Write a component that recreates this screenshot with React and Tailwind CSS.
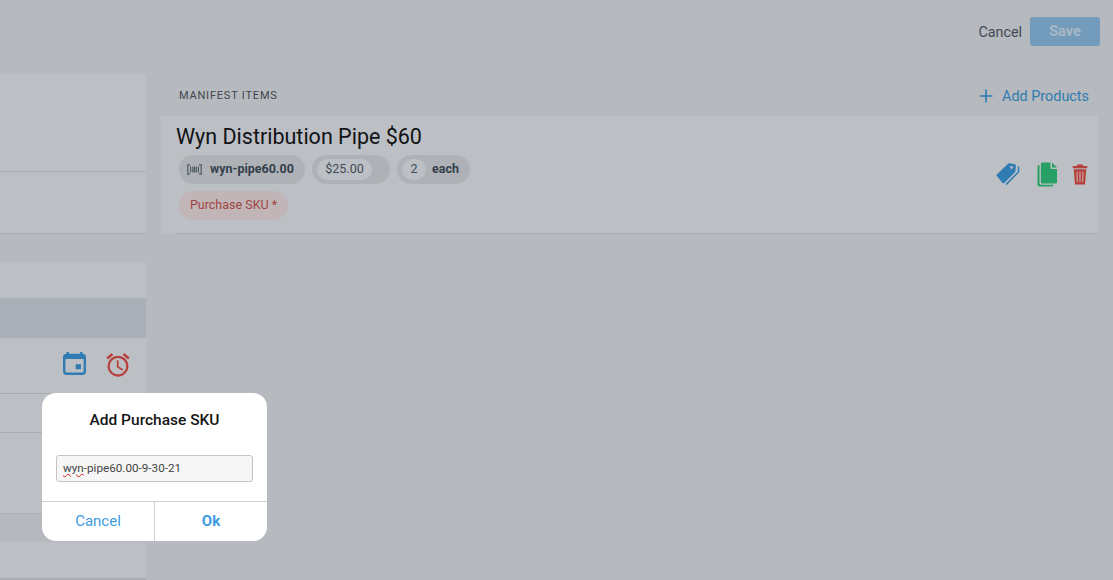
import React from 'react';
import { Plus } from 'lucide-react';
import { MdOutlineAlarm } from 'react-icons/md';

const Row = ({ className = '', children }) => (
  <div className={`border-b border-[#a9acb0] ${className}`}>{children}</div>
);

const BarcodeIcon = () => (
  <svg width="15" height="11" viewBox="0 0 15 11" fill="none" stroke="#4e5a64" strokeWidth="1.2">
    <path d="M3 .8H.8v9.4H3M12 .8h2.2v9.4H12" />
    <path d="M3.6 2.5v6M5.8 2.5v6M7.5 2.5v6M9.2 2.5v6M11.4 2.5v6" />
  </svg>
);

const TagIcon = () => (
  <svg width="24" height="25" viewBox="0 0 24 25" className="text-[#2f7cb3]">
    <path
      fill="currentColor"
      fillRule="evenodd"
      d="M.9 12.4 12.3 1.6c.4-.4.9-.5 1.4-.4l5.2 1c.6.1 1 .6 1 1.2l-.4 5.6c0 .5-.2.9-.5 1.2L8.2 20.9c-.5.5-1.2.5-1.7 0L.9 14.1c-.5-.5-.5-1.2 0-1.7zM15.5 4a1.4 1.4 0 1 0 0 2.8 1.4 1.4 0 0 0 0-2.8z"
    />
    <path fill="none" stroke="currentColor" strokeWidth="1.5" d="M22.5 4.5v4.8c0 .5-.2.9-.5 1.2L10 22.6" />
  </svg>
);

const CopyIcon = () => (
  <svg width="21" height="25" viewBox="0 0 21 25" className="text-[#27a065]">
    <path fill="currentColor" d="M5.5.5h8v5c0 .8.6 1.4 1.4 1.4h5.1v13c0 .9-.7 1.6-1.6 1.6H5.5c-.9 0-1.6-.7-1.6-1.6V2.100c0-.9.7-1.600 1.600-1.600z" />
    <path fill="currentColor" d="M15 .6l5 5h-5z" />
    <path fill="currentColor" d="M.5 4.600c0-.8.6-1.400 1.400-1.400h.6v17.500c0 1.100.9 2 2 2h11.700v.5c0 .8-.6 1.400-1.400 1.400H2.500c-1.100 0-2-.9-2-2z" />
  </svg>
);

const TrashIcon = () => (
  <svg width="16" height="21" viewBox="0 0 16 21" className="text-[#b5403c]">
    <path fill="currentColor" d="M5.500.5h5l.6 1.500h3.400c.5 0 .8.4.8.800v1.400H.7V2.800c0-.4.3-.8.8-.8h3.400z" />
    <path fill="currentColor" d="M1.800 5.200h12.400l-1.100 14.300c0 .6-.5 1-1.100 1H4c-.6 0-1.100-.4-1.100-1z" />
    <path stroke="#c9a3a3" strokeWidth="1.2" d="M5 7.500l.4 10.500M8 7.500V18M11 7.500 10.600 18" />
  </svg>
);

const CalendarIcon = () => (
  <svg width="23" height="23" viewBox="0 0 23 23" className="text-[#2f7cb3]">
    <rect x="1.200" y="3" width="20.600" height="18.800" rx="2.500" fill="none" stroke="currentColor" strokeWidth="2.400" />
    <path fill="currentColor" d="M1 3h21v4H1zM3.500 0h2.500v4H3.500zM17 0h2.500v4H17zM12.700 12.300H18v5h-5.300z" />
  </svg>
);

const LeftColumn = () => (
  <div className="w-[146px] shrink-0 pt-[74px]">
    <div className="rounded-r-[2px] bg-[#bcbfc4]">
      <Row className="h-[98px]" />
      <Row className="h-[62px]" />
    </div>
    <div className="mt-[28px] bg-[#bcbfc4]">
      <div className="h-[36px]" />
      <div className="h-[40px] bg-[#a9b0b7]" />
      <Row className="flex h-[56px] items-center justify-end gap-[18px] pr-[14px]">
        <span className="mb-[5px]"><CalendarIcon /></span>
        <MdOutlineAlarm size={28} className="mb-[2px] text-[#b8403a]" />
      </Row>
      <Row className="h-[39px]" />
      <Row className="h-[81px]" />
      <div className="h-[28px] bg-[#b5b8bc]" />
      <Row className="h-[38px] border-b-2" />
    </div>
  </div>
);

const Pill = ({ className = '', children }) => (
  <div className={`flex h-[29px] items-center rounded-full bg-[#aeb2b6] ${className}`}>{children}</div>
);

const ManifestItem = () => (
  <div className="flex h-[118px] bg-[#bcbfc4] pl-[15px]">
    <div className="flex-1 border-b border-[#a9acb0]">
      <h2 className="mt-[6px] text-[21.5px] leading-[29px] text-[#111315]">Wyn Distribution Pipe $60</h2>
      <div className="ml-[3px] mt-[4px] flex gap-[7px] text-[12.5px]">
        <Pill className="w-[126px] pl-[8px] font-bold text-[#33404b]">
          <BarcodeIcon />
          <span className="ml-[8px]">wyn-pipe60.00</span>
        </Pill>
        <Pill className="w-[78px] pl-[5px] text-[#3f4c57]">
          <span className="flex h-[21px] w-[55px] items-center justify-center rounded-full bg-[#bcbfc4]">$25.00</span>
        </Pill>
        <Pill className="w-[73px] pl-[5px] font-bold text-[#33404b]">
          <span className="flex h-[21px] w-[24px] items-center justify-center rounded-full bg-[#bcbfc4] font-normal text-[#3f4c57]">2</span>
          <span className="ml-[6px]">each</span>
        </Pill>
      </div>
      <div className="ml-[3px] mt-[7px] flex h-[29px] w-[109px] items-center justify-center rounded-full bg-[#c1b5b7] text-[12.5px] text-[#a04543]">
        Purchase SKU *
      </div>
    </div>
    <div className="flex w-0 items-start justify-end">
      <div className="mr-[10px] mt-[46px] flex shrink-0 items-center">
        <TagIcon />
        <span className="ml-[17px]"><CopyIcon /></span>
        <span className="ml-[14px]"><TrashIcon /></span>
      </div>
    </div>
  </div>
);

const Modal = () => (
  <div className="absolute left-[42px] top-[393px] w-[225px] rounded-[14px] bg-white">
    <div className="flex h-[109px] flex-col items-center border-b border-[#cfcfcf]">
      <h3 className="mt-[18px] text-[15.5px] font-medium leading-[18px] text-[#161616]">Add Purchase SKU</h3>
      <div className="mt-[26px] flex h-[27px] w-[197px] items-center rounded-[3px] border border-[#c4c4c4] bg-[#f6f6f6] px-[6px] text-[11.7px] text-[#444]">
        <span className="underline decoration-wavy decoration-[#d02020] decoration-[1px]">wyn</span>-pipe60.00-9-30-21
      </div>
    </div>
    <div className="flex h-[39px] text-[15px] text-[#3d9be0]">
      <div className="flex w-[113px] items-center justify-center border-r border-[#cfcfcf]">Cancel</div>
      <div className="flex flex-1 items-center justify-center font-bold">Ok</div>
    </div>
  </div>
);

export default function App() {
  return (
    <div className="relative flex h-[580px] w-[1113px] overflow-hidden bg-[#b6b9bd] font-['Roboto',sans-serif]">
      <LeftColumn />
      <div className="ml-[15px] flex-1 pr-[15px]">
        <div className="flex h-[64px] items-start justify-end">
          <span className="mt-[22px] text-[14.3px] leading-[20px] text-[#3f4a54]">Cancel</span>
          <button className="-mr-[2px] ml-[8px] mt-[17px] h-[29px] w-[70px] rounded-[3px] bg-[#739bbb] pt-[1px] text-[14.5px] font-bold text-[#a9b8c5]">Save</button>
        </div>
        <div className="flex h-[52px] items-center justify-between pl-[18px] pr-[9px] pt-[13px]">
          <span className="text-[11px] tracking-[0.8px] text-[#3f464d]">MANIFEST ITEMS</span>
          <span className="flex items-center text-[14.4px] text-[#2f7cb3]">
            <Plus size={20} className="mr-[6px]" />
            Add Products
          </span>
        </div>
        <ManifestItem />
      </div>
      <Modal />
    </div>
  );
}
